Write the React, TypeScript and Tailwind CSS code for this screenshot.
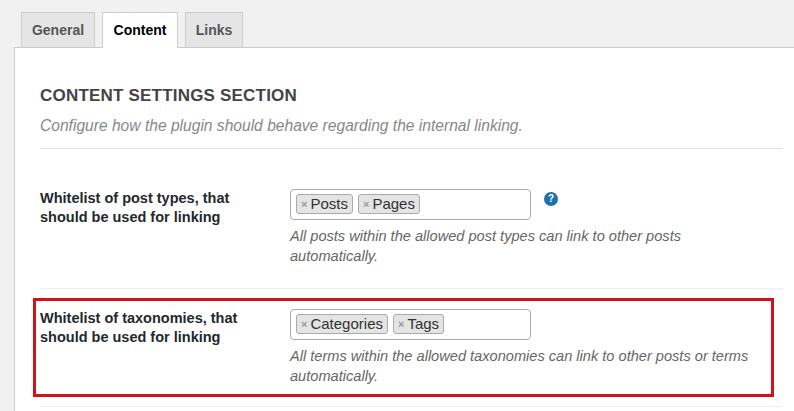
const font = { fontFamily: '"Liberation Sans", Arial, sans-serif' }

function Tag({ label }: { label: string }) {
  return (
    <span className="flex h-[20px] items-center gap-[3px] rounded-[3px] border border-[#aaa] bg-[#e4e4e4] px-[4px] text-[15px] text-[#333]">
      <span className="text-[11px] font-bold text-[#999]">×</span>
      {label}
    </span>
  )
}

function Row({ label, tags, desc, help }: { label: string[]; tags: string[]; desc: string[]; help?: boolean }) {
  return (
    <div className="flex">
      <div className="w-[250px] pt-[0px] text-[14.5px] font-bold leading-[19px] text-[#23282d]">
        {label.map((l) => (
          <div key={l}>{l}</div>
        ))}
      </div>
      <div>
        <div className="flex items-start gap-[13px]">
          <div className="flex h-[31px] w-[241px] items-center gap-[5px] rounded-[4px] border border-[#aaa] bg-white px-[5px]">
            {tags.map((t) => (
              <Tag key={t} label={t} />
            ))}
          </div>
          {help && (
            <span className="mt-[3px] flex h-[14px] w-[14px] items-center justify-center rounded-full bg-[#1f6fa8] text-[10px] font-bold text-white">?</span>
          )}
        </div>
        <div className="mt-[6px] text-[14.6px] italic leading-[20px] text-[#666]">
          {desc.map((d) => (
            <div key={d}>{d}</div>
          ))}
        </div>
      </div>
    </div>
  )
}

export default function App() {
  return (
    <div className="h-[411px] w-[794px] overflow-hidden bg-[#f1f1f1] pl-[14px] pt-[12px]" style={font}>
      <div className="flex gap-[7px] pl-[7px]">
        <div className="flex h-[35px] w-[74px] items-center justify-center border border-b-0 border-[#ccc] bg-[#e5e5e5] text-[14px] font-bold text-[#555]">General</div>
        <div className="relative z-10 -mb-px flex h-[36px] w-[76px] items-center justify-center border border-b-0 border-[#ccc] bg-white text-[14px] font-bold text-black">Content</div>
        <div className="flex h-[35px] w-[58px] items-center justify-center border border-b-0 border-[#ccc] bg-[#e5e5e5] text-[14px] font-bold text-[#555]">Links</div>
      </div>
      <div className="h-[400px] border border-r-0 border-[#ccc] bg-white pl-[25px] pr-[12px] pt-[35px]">
        <div className="text-[17px] font-bold uppercase tracking-[0.2px] text-[#444]">Content Settings Section</div>
        <div className="mt-[5px] text-[15.6px] italic text-[#888]">Configure how the plugin should behave regarding the internal linking.</div>
        <div className="mt-[11px] border-t border-[#ddd]" />
        <div className="pb-[22px] pt-[40px]">
          <Row
            label={['Whitelist of post types, that', 'should be used for linking']}
            tags={['Posts', 'Pages']}
            desc={['All posts within the allowed post types can link to other posts', 'automatically.']}
            help
          />
        </div>
        <div className="border-t border-[#eee] pt-[9px]">
          <div className="-ml-[7px] w-[741px] border-[3px] border-[#d0141b] pb-[8px] pl-[4px] pt-[8px]">
            <Row
              label={['Whitelist of taxonomies, that', 'should be used for linking']}
              tags={['Categories', 'Tags']}
              desc={['All terms within the allowed taxonomies can link to other posts or terms', 'automatically.']}
            />
          </div>
        </div>
        <div className="mt-[9px] border-t border-[#eee]" />
      </div>
    </div>
  )
}
